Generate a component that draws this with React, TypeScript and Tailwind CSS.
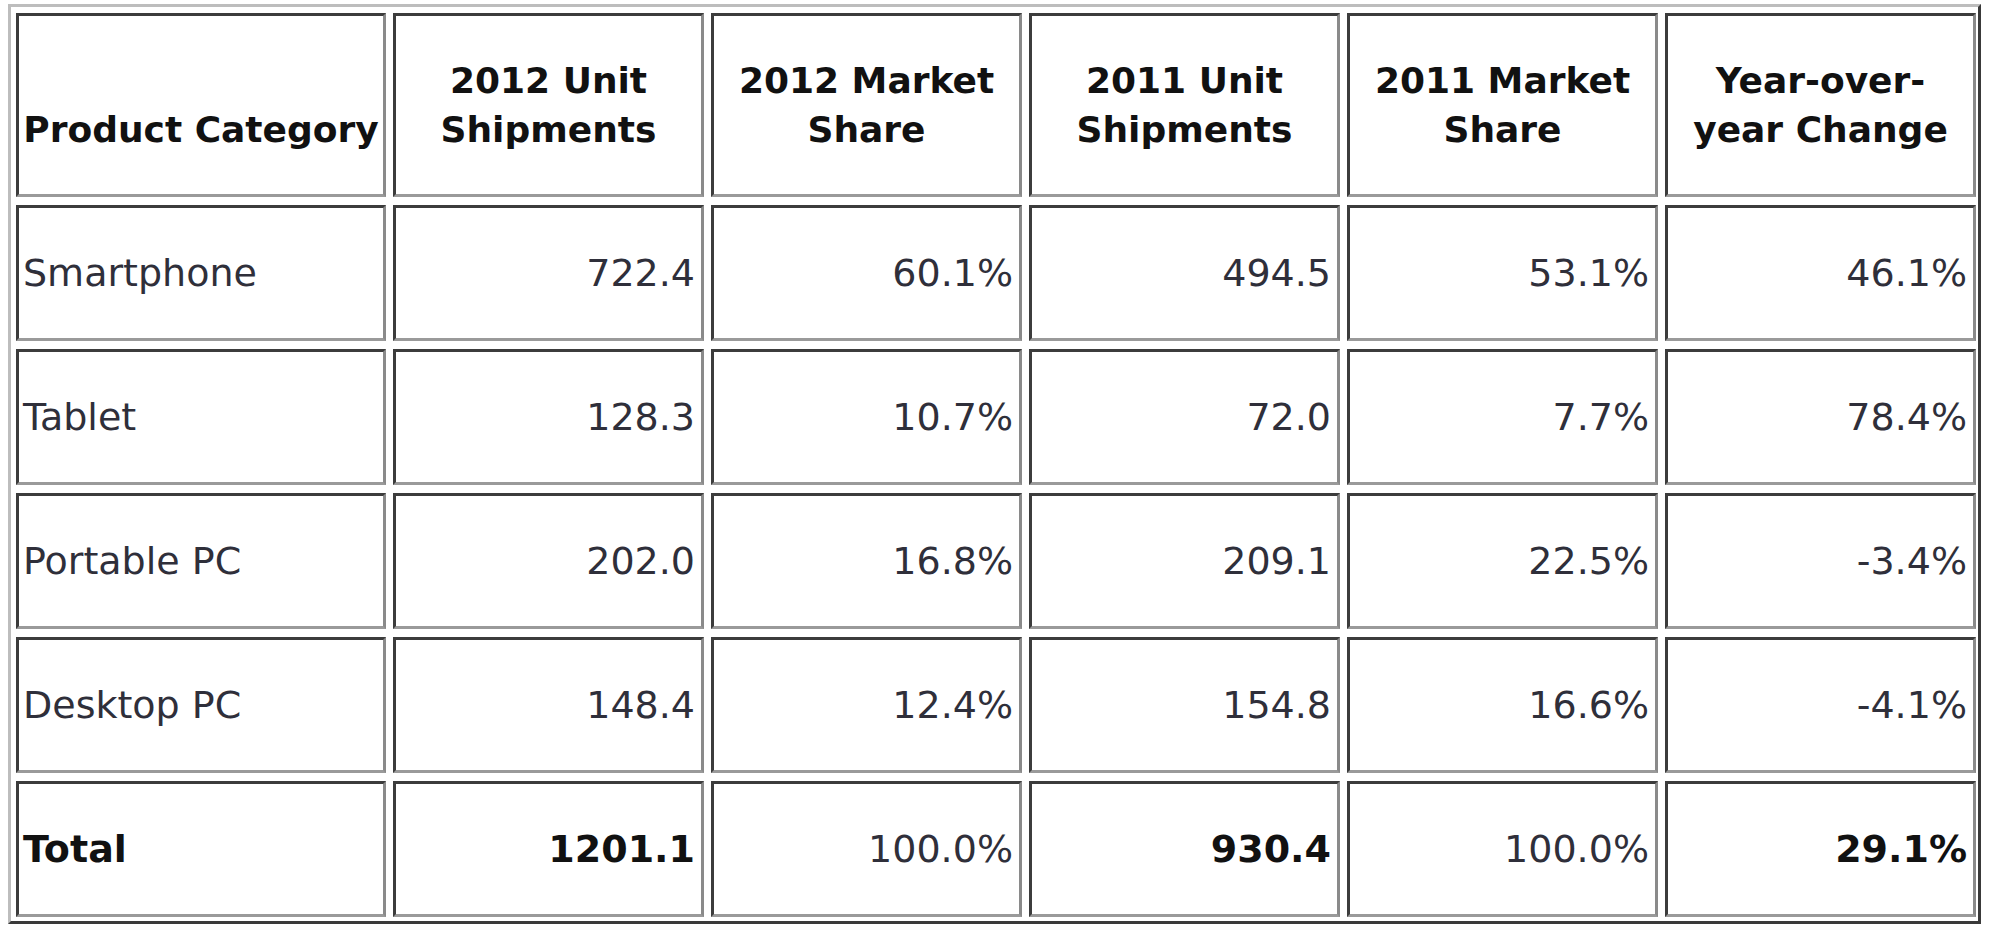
const headers: string[][] = [
  ['\u00a0', 'Product Category'],
  ['2012 Unit', 'Shipments'],
  ['2012 Market', 'Share'],
  ['2011 Unit', 'Shipments'],
  ['2011 Market', 'Share'],
  ['Year-over-', 'year Change'],
];

const rows: string[][] = [
  ['Smartphone', '722.4', '60.1%', '494.5', '53.1%', '46.1%'],
  ['Tablet', '128.3', '10.7%', '72.0', '7.7%', '78.4%'],
  ['Portable PC', '202.0', '16.8%', '209.1', '22.5%', '-3.4%'],
  ['Desktop PC', '148.4', '12.4%', '154.8', '16.6%', '-4.1%'],
];

const total = ['Total', '1201.1', '100.0%', '930.4', '100.0%', '29.1%'];
const totalBold = [true, true, false, true, false, true];

const cell =
  'flex items-center border-[3px] border-t-[#3c3c3c] border-l-[#3c3c3c] border-b-[#9a9a9a] border-r-[#8a8a8a] bg-white';

function Cell({ text, first, bold }: { text: string; first: boolean; bold?: boolean }) {
  return (
    <div className={`${cell} ${first ? 'justify-start pl-[4px]' : 'justify-end pr-[6px]'}`}>
      <span className={bold ? 'font-bold text-[#111]' : 'text-[#2f2f3a]'}>{text}</span>
    </div>
  );
}

export default function App() {
  return (
    <div className="h-[942px] w-[2000px] bg-white pl-2 pt-1" style={{ fontFamily: '"DejaVu Sans", Verdana, sans-serif' }}>
      <div className="w-[1973px] border-[3px] border-t-[#bdbdbd] border-l-[#bdbdbd] border-b-[#3a3a3a] border-r-[#3a3a3a] px-[5px] pt-[6px] pb-[4px]">
        <div className="grid grid-cols-[370px_repeat(5,311px)] grid-rows-[184px_repeat(5,136px)] gap-x-[7px] gap-y-[8px] text-[38px] leading-none">
          {headers.map((h, i) => (
            <div key={i} className={`${cell} flex-col justify-center text-center text-[36px] font-bold leading-[49px] text-[#111]`}>
              <span>{h[0]}</span>
              <span>{h[1]}</span>
            </div>
          ))}
          {rows.map((r, ri) =>
            r.map((v, ci) => <Cell key={`${ri}-${ci}`} text={v} first={ci === 0} />),
          )}
          {total.map((v, ci) => (
            <Cell key={`t-${ci}`} text={v} first={ci === 0} bold={totalBold[ci]} />
          ))}
        </div>
      </div>
    </div>
  );
}
